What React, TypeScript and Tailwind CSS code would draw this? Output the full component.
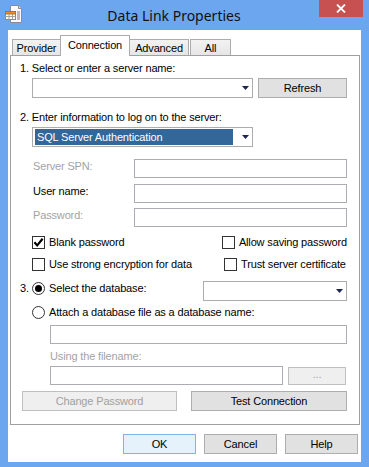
import React from "react";

const Arrow = () => (
  <svg width="7" height="4" viewBox="0 0 7 4" className="shrink-0">
    <polygon points="0,0 7,0 3.5,4" fill="#1c2650" />
  </svg>
);

function Combo({ className = "", children }: { className?: string; children?: React.ReactNode }) {
  return (
    <div className={`flex h-[20px] items-center border border-[#acacac] bg-white pr-[3px] ${className}`}>
      <div className="flex min-w-0 flex-1 self-stretch">{children}</div>
      <Arrow />
    </div>
  );
}

function TextBox({ className = "" }: { className?: string }) {
  return <div className={`h-[19px] border border-[#abadb3] bg-white ${className}`} />;
}

function Btn({
  children,
  disabled,
  className = "",
}: {
  children: React.ReactNode;
  disabled?: boolean;
  className?: string;
}) {
  return (
    <div
      className={`flex items-center justify-center border ${
        disabled
          ? "border-[#bfbfbf] bg-[#efefef] text-[#a0a0a0]"
          : "border-[#adadad] bg-[#e1e1e1] text-black"
      } ${className}`}
    >
      {children}
    </div>
  );
}

function Check({ checked, label }: { checked?: boolean; label: string }) {
  return (
    <div className="flex h-[13px] items-center gap-[4px]">
      <svg width="13" height="13" viewBox="0 0 13 13" className="shrink-0">
        <rect x="0.5" y="0.5" width="12" height="12" fill="#fff" stroke="#333" />
        {checked && (
          <path d="M2.4 6.2 L5.2 9.4 L10.6 2.8" fill="none" stroke="#000" strokeWidth="2.2" />
        )}
      </svg>
      <span className="whitespace-nowrap">{label}</span>
    </div>
  );
}

function Radio({ checked, label }: { checked?: boolean; label: string }) {
  return (
    <div className="flex h-[13px] items-center gap-[4px]">
      <svg width="13" height="13" viewBox="0 0 13 13" className="shrink-0">
        <circle cx="6.5" cy="6.5" r="6" fill="#fff" stroke="#333" />
        {checked && <circle cx="6.5" cy="6.5" r="3.5" fill="#000" />}
      </svg>
      <span className="whitespace-nowrap">{label}</span>
    </div>
  );
}

function AppIcon() {
  return (
    <svg width="18" height="18" viewBox="0 0 18 18">
      <path d="M5.5 0.5 H13.5 L16.5 3.5 V17.5 H5.5 Z" fill="#fafafa" stroke="#8c8c8c" />
      <path d="M13.5 0.5 V3.5 H16.5" fill="#dcdcdc" stroke="#8c8c8c" />
      <rect x="12" y="6" width="3" height="9" fill="#b9b9b9" />
      <rect x="0.5" y="6.5" width="10" height="8" fill="#fff" stroke="#8a8a8a" />
      <rect x="0.5" y="6.5" width="10" height="2.5" fill="#f0882c" stroke="#c76a1a" />
      <line x1="0.5" y1="11.5" x2="10.5" y2="11.5" stroke="#a0a0a0" />
      <line x1="4" y1="9" x2="4" y2="14.5" stroke="#a0a0a0" />
      <line x1="7.5" y1="9" x2="7.5" y2="14.5" stroke="#a0a0a0" />
    </svg>
  );
}

export default function App() {
  return (
    <div className="flex h-[467px] w-[369px] flex-col bg-[#6ca6ee] font-['Liberation_Sans',Arial,sans-serif] text-[11px] leading-[13px] tracking-[-0.15px] text-black">
      {/* title bar */}
      <div className="flex h-[30px] shrink-0">
        <div className="w-[23px] pl-[5px] pt-[5px]">
          <AppIcon />
        </div>
        <div className="flex flex-1 items-center justify-center pl-[6px] pt-[1px] font-['Noto_Sans',sans-serif] text-[14px] leading-[18px] tracking-normal text-[#111]">
          Data Link Properties
        </div>
        <div className="flex h-[17px] w-[44px] items-center justify-center bg-[#c75050] mr-[6px]">
          <svg width="10" height="9" viewBox="0 0 10 9">
            <path d="M1 0.5 L9 8.5 M9 0.5 L1 8.5" stroke="#fff" strokeWidth="1.8" />
          </svg>
        </div>
      </div>

      {/* client */}
      <div className="mx-[8px] mb-[5px] flex flex-1 flex-col bg-white pt-[5px]">
        {/* tabs */}
        <div className="ml-[4px] flex h-[20px] items-end">
          <div className="flex h-[16px] w-[49px] items-center justify-center border border-b-0 border-[#acacac] bg-gradient-to-b from-[#f2f2f2] to-[#e6e6e6] pt-[1px]">
            Provider
          </div>
          <div className="relative z-10 -mb-px -ml-px flex h-[21px] w-[70px] items-start justify-center border border-b-0 border-[#acacac] bg-white pt-[3px]">
            Connection
          </div>
          <div className="-ml-px flex h-[16px] w-[60px] items-center justify-center border border-b-0 border-[#acacac] bg-gradient-to-b from-[#f2f2f2] to-[#e6e6e6] pt-[1px]">
            Advanced
          </div>
          <div className="ml-px flex h-[16px] w-[41px] items-center justify-center border border-b-0 border-[#acacac] bg-gradient-to-b from-[#f2f2f2] to-[#e6e6e6] pt-[1px]">
            All
          </div>
        </div>

        {/* panel */}
        <div className="ml-[2px] flex h-[370px] w-[350px] flex-col border border-[#a0a0a0] pl-[9px] pr-[12px]">
          <div className="mt-[6px] h-[13px]">1. Select or enter a server name:</div>
          <div className="mt-[3px] flex h-[20px] pl-[12px]">
            <Combo className="w-[221px]" />
            <Btn className="ml-[5px] h-[20px] w-[89px]">Refresh</Btn>
          </div>

          <div className="mt-[13px] h-[13px]">2. Enter information to log on to the server:</div>
          <div className="mt-[3px] flex pl-[12px]">
            <Combo className="w-[221px]">
              <div className="my-[1px] ml-[2px] flex w-[198px] items-center bg-[#336699] pl-[2px] text-white">
                SQL Server Authentication
              </div>
            </Combo>
          </div>

          <div className="mt-[12px] flex h-[19px] items-start">
            <div className="ml-[13px] w-[101px] pt-[1px] text-[#a3a3a3]">Server SPN:</div>
            <TextBox className="flex-1" />
          </div>
          <div className="mt-[6px] flex h-[19px] items-start">
            <div className="ml-[13px] w-[101px] pt-[1px]">User name:</div>
            <TextBox className="flex-1" />
          </div>
          <div className="mt-[5px] flex h-[19px] items-start">
            <div className="ml-[13px] w-[101px] pt-[1px] text-[#a3a3a3]">Password:</div>
            <TextBox className="flex-1" />
          </div>

          <div className="mt-[9px] flex pl-[12px]">
            <div className="w-[192px]">
              <Check checked label="Blank password" />
            </div>
            <Check label="Allow saving password" />
          </div>
          <div className="mt-[9px] flex pl-[12px]">
            <div className="w-[192px]">
              <Check label="Use strong encryption for data" />
            </div>
            <Check label="Trust server certificate" />
          </div>

          <div className="mt-[10px] flex h-[20px] items-start">
            <div className="mt-[1px] flex items-center">
              <span className="w-[12px]">3.</span>
              <Radio checked label="Select the database:" />
            </div>
            <Combo className="ml-auto w-[144px]" />
          </div>
          <div className="mt-[5px] pl-[12px]">
            <Radio label="Attach a database file as a database name:" />
          </div>

          <TextBox className="ml-[30px] mt-[6px]" />
          <div className="ml-[30px] mt-[6px] h-[13px] text-[#a3a3a3]">Using the filename:</div>
          <div className="ml-[30px] mt-[3px] flex h-[19px] items-center">
            <TextBox className="w-[233px]" />
            <Btn disabled className="ml-[5px] h-[18px] w-[58px] pb-[3px]">
              ...
            </Btn>
          </div>

          <div className="ml-[2px] mt-[6px] flex">
            <Btn disabled className="h-[20px] w-[155px]">
              Change Password
            </Btn>
            <Btn className="ml-[14px] h-[20px] w-[156px]">Test Connection</Btn>
          </div>
        </div>

        {/* dialog buttons */}
        <div className="mt-[9px] flex justify-end gap-[8px] pr-[3px]">
          <div className="flex h-[20px] w-[73px] items-center justify-center border border-[#7eb4ea] bg-[#e5f1fb]">
            OK
          </div>
          <Btn className="h-[20px] w-[73px]">Cancel</Btn>
          <Btn className="h-[20px] w-[73px]">Help</Btn>
        </div>
      </div>
    </div>
  );
}
